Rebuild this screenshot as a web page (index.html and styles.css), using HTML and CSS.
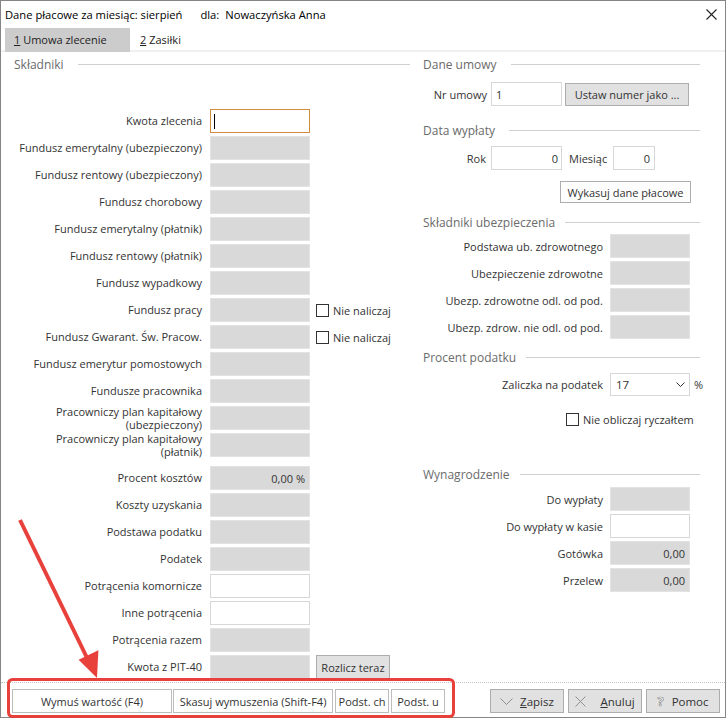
FILE: index.html
```html
<!DOCTYPE html>
<html lang="pl">
<head>
<meta charset="utf-8">
<title>Dane płacowe</title>
<link rel="stylesheet" href="styles.css">
</head>
<body>
<div class="window">
  <div class="titlebar">
    <span class="title">Dane płacowe za miesiąc: sierpień</span>
    <span class="dla">dla:</span>
    <span class="who">Nowaczyńska Anna</span>
    <span class="close"><svg width="11" height="11" viewBox="0 0 11 11"><path d="M0.5 0.5L10.5 10.5M10.5 0.5L0.5 10.5" stroke="#222" stroke-width="1.1" fill="none"/></svg></span>
  </div>
  <div class="tabs">
    <div class="tab active"><span><u>1</u> Umowa zlecenie</span></div>
    <div class="tab second"><span><u>2</u> Zasiłki</span></div>
  </div>
  <div class="panel">
    <div class="col-left">
      <div class="ghead gleft">Składniki</div>
      <div class="lrow first"><span class="lbl">Kwota zlecenia</span><span class="f focus"><span class="caret"></span></span></div>
      <div class="lrow"><span class="lbl">Fundusz emerytalny (ubezpieczony)</span><span class="f g"></span></div>
      <div class="lrow"><span class="lbl">Fundusz rentowy (ubezpieczony)</span><span class="f g"></span></div>
      <div class="lrow"><span class="lbl">Fundusz chorobowy</span><span class="f g"></span></div>
      <div class="lrow"><span class="lbl">Fundusz emerytalny (płatnik)</span><span class="f g"></span></div>
      <div class="lrow"><span class="lbl">Fundusz rentowy (płatnik)</span><span class="f g"></span></div>
      <div class="lrow"><span class="lbl">Fundusz wypadkowy</span><span class="f g"></span></div>
      <div class="lrow"><span class="lbl">Fundusz pracy</span><span class="f g"></span><span class="chk lchk"><span class="cbox"></span>Nie naliczaj</span></div>
      <div class="lrow"><span class="lbl">Fundusz Gwarant. Św. Pracow.</span><span class="f g"></span><span class="chk lchk"><span class="cbox"></span>Nie naliczaj</span></div>
      <div class="lrow"><span class="lbl">Fundusz emerytur pomostowych</span><span class="f g"></span></div>
      <div class="lrow"><span class="lbl">Fundusze pracownika</span><span class="f g"></span></div>
      <div class="lrow"><span class="lbl">Pracowniczy plan kapitałowy<br>(ubezpieczony)</span><span class="f g"></span></div>
      <div class="lrow"><span class="lbl">Pracowniczy plan kapitałowy<br>(płatnik)</span><span class="f g"></span></div>
      <div class="lrow sep"><span class="lbl">Procent kosztów</span><span class="f g">0,00 %</span></div>
      <div class="lrow"><span class="lbl">Koszty uzyskania</span><span class="f g"></span></div>
      <div class="lrow"><span class="lbl">Podstawa podatku</span><span class="f g"></span></div>
      <div class="lrow"><span class="lbl">Podatek</span><span class="f g"></span></div>
      <div class="lrow"><span class="lbl">Potrącenia komornicze</span><span class="f w"></span></div>
      <div class="lrow"><span class="lbl">Inne potrącenia</span><span class="f w"></span></div>
      <div class="lrow"><span class="lbl">Potrącenia razem</span><span class="f g"></span></div>
      <div class="lrow"><span class="lbl">Kwota z PIT-40</span><span class="f g"></span><span class="btn rozlicz">Rozlicz teraz</span></div>
    </div>
    <div class="col-right">
      <div class="ghead">Dane umowy</div>
      <div class="rrow nr"><span class="rl nr-l">Nr umowy</span><span class="f w nr-f">1</span><span class="btn ustaw">Ustaw numer jako ...</span></div>
      <div class="ghead g2">Data wypłaty</div>
      <div class="rrow rok"><span class="rl rok-l">Rok</span><span class="f w rok-f">0</span><span class="mies-l">Miesiąc</span><span class="f w mies-f">0</span></div>
      <div class="rrow wyk"><span class="btn light wyk-b">Wykasuj dane płacowe</span></div>
      <div class="ghead g3">Składniki ubezpieczenia</div>
      <div class="rrow srow firstr"><span class="rl sl">Podstawa ub. zdrowotnego</span><span class="f g sf"></span></div>
      <div class="rrow srow"><span class="rl sl">Ubezpieczenie zdrowotne</span><span class="f g sf"></span></div>
      <div class="rrow srow"><span class="rl sl">Ubezp. zdrowotne odl. od pod.</span><span class="f g sf"></span></div>
      <div class="rrow srow"><span class="rl sl">Ubezp. zdrow. nie odl. od pod.</span><span class="f g sf"></span></div>
      <div class="ghead g4">Procent podatku</div>
      <div class="rrow zal"><span class="rl sl">Zaliczka na podatek</span><span class="select"><span>17</span><svg width="9" height="5" viewBox="0 0 9 5"><path d="M0.5 0.5L4.5 4.5L8.5 0.5" stroke="#333" stroke-width="1" fill="none"/></svg></span><span class="pct">%</span></div>
      <div class="rrow chkrow"><span class="chk"><span class="cbox"></span>Nie obliczaj ryczałtem</span></div>
      <div class="ghead g5">Wynagrodzenie</div>
      <div class="rrow srow firstw"><span class="rl sl">Do wypłaty</span><span class="f g sf"></span></div>
      <div class="rrow srow"><span class="rl sl">Do wypłaty w kasie</span><span class="f w sf"></span></div>
      <div class="rrow srow"><span class="rl sl">Gotówka</span><span class="f g sf">0,00</span></div>
      <div class="rrow srow"><span class="rl sl">Przelew</span><span class="f g sf">0,00</span></div>
    </div>
  </div>
  <div class="footer">
    <div class="fleft">
      <span class="fb wide">Wymuś wartość (F4)</span>
      <span class="fb wide second">Skasuj wymuszenia (Shift-F4)</span>
      <span class="fb narrow">Podst. ch</span>
      <span class="fb narrow">Podst. u</span>
    </div>
    <div class="fright">
      <span class="btn act zapisz"><svg width="13" height="7" viewBox="0 0 13 7"><path d="M0.5 0.5L6.5 6.5L12.5 0.5" stroke="#8f8f8f" stroke-width="1" fill="none"/></svg><span><u>Z</u>apisz</span></span>
      <span class="btn act anuluj"><svg width="11" height="11" viewBox="0 0 11 11"><path d="M0.5 0.5L10.5 10.5M10.5 0.5L0.5 10.5" stroke="#8f8f8f" stroke-width="1" fill="none"/></svg><span><u>A</u>nuluj</span></span>
      <span class="btn act pomoc"><span class="qm">?</span><span>Pomoc</span></span>
    </div>
  </div>
</div>
<svg class="annot" width="727" height="720" viewBox="0 0 727 720">
  <line x1="20" y1="520" x2="90" y2="664" stroke="#e8413c" stroke-width="4"/>
  <polygon points="97,678 78.6,659.8 98.4,650.2" fill="#e8413c"/>
  <rect x="8.5" y="679.5" width="445" height="37" rx="4" ry="4" fill="none" stroke="#e8413c" stroke-width="3"/>
</svg>
</body>
</html>
```
FILE: styles.css
```css
* { box-sizing: border-box; }
body {
  margin: 0;
  position: relative;
  background: #fff;
  font-family: "Open Sans", "Noto Sans", sans-serif;
  font-size: 11px;
  color: #333;
}
.window {
  width: 726px;
  height: 718px;
  border: 1px solid #858585;
  display: flex;
  flex-direction: column;
  background: #fff;
}
.titlebar {
  height: 27px;
  display: flex;
  align-items: center;
  padding-left: 4px;
  color: #000;
  font-size: 11.2px;
  white-space: nowrap;
}
.dla { margin-left: 18px; }
.who { margin-left: 6px; }
.close { margin-left: auto; margin-right: 8px; display: flex; }

.tabs { height: 22px; display: flex; padding-left: 4px; }
.tab { height: 22px; display: flex; align-items: center; color: #222; white-space: nowrap; }
.tab.active {
  background: #cccccc;
  width: 125px;
  padding-left: 9px;
  height: 24px;
  padding-bottom: 2px;
  position: relative;
  z-index: 1;
}
.tab.second { padding-left: 10px; }

.panel {
  height: 632px;
  border-top: 2px solid #f0f0f0;
  padding-top: 4px;
  display: flex;
}
.ghead {
  display: flex;
  align-items: center;
  height: 16px;
  font-size: 12px;
  color: #6b6b6b;
  white-space: nowrap;
}
.ghead::after {
  content: "";
  flex: 1;
  height: 1px;
  background: #d0d0d0;
  margin-left: 14px;
}
.col-left { width: 409px; flex-shrink: 0; }
.gleft { padding-left: 13px; }
.lrow { display: flex; align-items: center; height: 24px; margin-top: 3px; }
.lrow.first { margin-top: 37px; }
.lrow.sep { margin-top: 9px; }
.lbl {
  width: 201px;
  text-align: right;
  margin-right: 8px;
  line-height: 13.5px;
  white-space: nowrap;
  flex-shrink: 0;
}
.f {
  width: 100px;
  height: 24px;
  display: flex;
  align-items: center;
  justify-content: flex-end;
  padding: 0 4px;
  color: #333;
  flex-shrink: 0;
}
.g { background: #d9d9d9; border: 1px solid #e3e3e3; }
.w { background: #fff; border: 1px solid #d7d7d7; }
.focus { background: #fff; border: 1px solid #d38d43; justify-content: flex-start; padding-left: 3px; }
.caret { width: 1px; height: 15px; background: #000; }
.chk { display: flex; align-items: center; gap: 4px; white-space: nowrap; }
.lchk { margin-left: 6px; }
.cbox { width: 13px; height: 13px; border: 1px solid #333; background: #fff; }
.btn {
  display: flex;
  align-items: center;
  justify-content: center;
  height: 24px;
  background: #e1e1e1;
  border: 1px solid #adadad;
  color: #333;
  white-space: nowrap;
  flex-shrink: 0;
}
.btn.light { background: #fdfdfd; }
.rozlicz { width: 74px; margin-left: 6px; }

.col-right { flex: 1; min-width: 0; padding: 0 25px 0 13px; }
.rrow { display: flex; align-items: center; height: 24px; }
.rl { text-align: right; white-space: nowrap; flex-shrink: 0; }
.nr { margin-top: 10px; }
.nr-l { width: 64px; margin-right: 4px; }
.nr-f { width: 71px; justify-content: flex-start; }
.ustaw { width: 124px; height: 23px; margin-left: 3px; }
.g2 { margin-top: 16px; }
.rok { margin-top: 8px; }
.rok-l { width: 63px; margin-right: 5px; }
.rok-f { width: 71px; padding-right: 3px; }
.mies-l { width: 38px; margin-left: 7px; margin-right: 6px; white-space: nowrap; flex-shrink: 0; }
.mies-f { width: 42px; }
.wyk { margin-top: 11px; height: 22px; padding-left: 137px; }
.wyk-b { width: 131px; height: 22px; }
.g3 { margin-top: 11px; }
.g3::after, .g4::after, .g5::after { margin-left: 10px; }
.srow { margin-top: 3px; }
.srow.firstr { margin-top: 4px; }
.sl { width: 180px; margin-right: 7px; }
.sf { width: 80px; }
.g4 { margin-top: 10px; }
.zal { margin-top: 7px; }
.select {
  width: 80px;
  height: 23px;
  border: 1px solid #d7d7d7;
  background: #fff;
  display: flex;
  align-items: center;
  justify-content: space-between;
  padding: 0 4px 0 5px;
  font-size: 11.5px;
  flex-shrink: 0;
}
.pct { margin-left: 4px; }
.chkrow { margin-top: 15px; height: 16px; padding-left: 143px; }
.g5 { margin-top: 39px; }
.srow.firstw { margin-top: 5px; }

.footer {
  height: 35px;
  border-top: 1px dotted #c4c4c4;
  display: flex;
  padding: 6px 5px 0 11px;
}
.fleft { display: flex; height: 24px; }
.fb {
  height: 24px;
  background: #fff;
  border: 1px solid #bdbdbd;
  display: flex;
  align-items: center;
  justify-content: center;
  white-space: nowrap;
  color: #333;
}
.fb.wide { width: 160px; }
.fb.wide.second { margin-left: 1px; }
.fb.narrow { width: 54px; margin-left: 2px; }
.fright { margin-left: auto; display: flex; gap: 4px; height: 24px; }
.act { width: 74px; font-size: 11.5px; }
.zapisz { gap: 7px; }
.anuluj { gap: 14px; }
.pomoc { gap: 8px; }
.qm {
  color: #fff;
  -webkit-text-stroke: 0.7px #8f8f8f;
  font-size: 13px;
  font-weight: bold;
  line-height: 13px;
}
.annot { position: absolute; left: 0; top: 0; pointer-events: none; }
```
